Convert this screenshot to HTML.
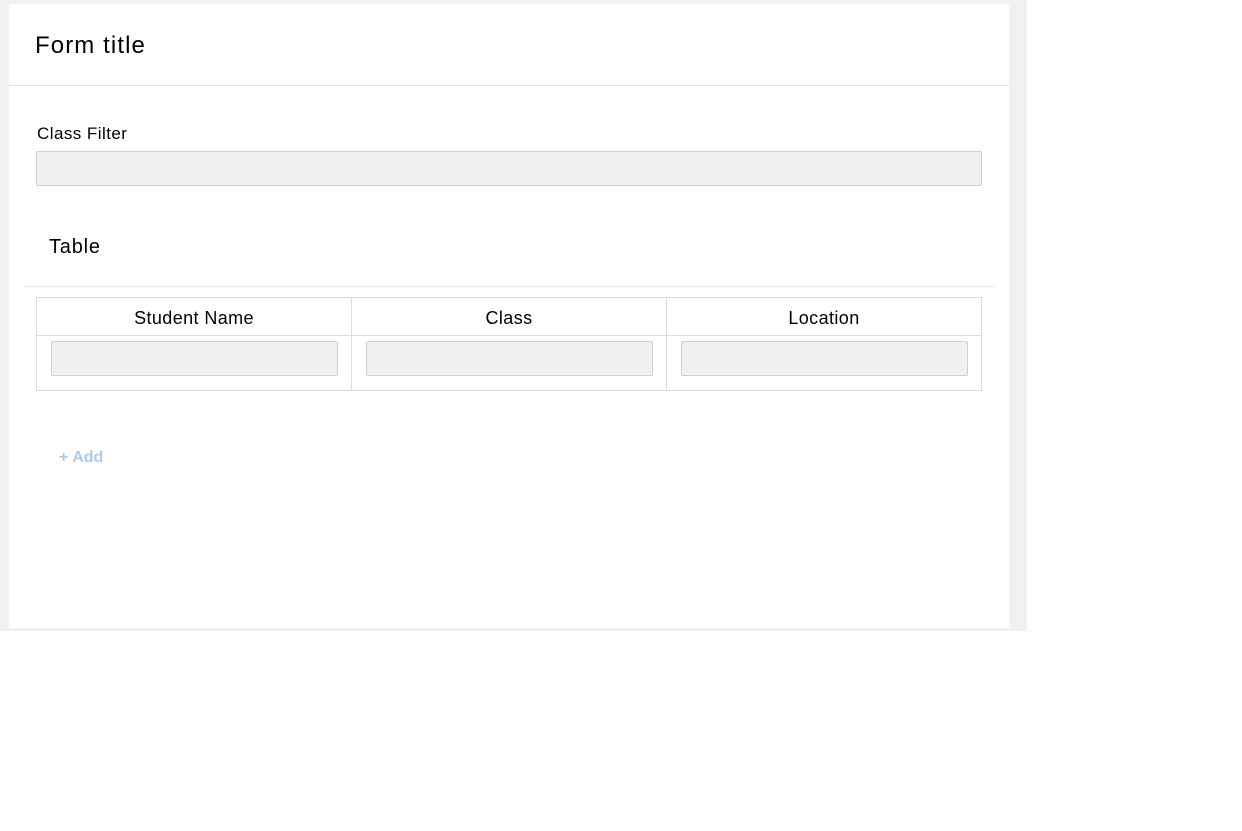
<!DOCTYPE html>
<html><head><meta charset="utf-8"><style>
html,body{margin:0;padding:0;width:1242px;height:831px;background:#fff;overflow:hidden;font-family:"Liberation Sans",sans-serif;color:#000}
.bg{position:absolute;left:0;top:0;width:1027px;height:631px;background:#f1f1f1}
.card{position:absolute;left:9px;top:4px;width:1000px;height:624px;background:#fff}
.a{position:absolute;white-space:nowrap}
.inp{position:absolute;background:#f0f0f0;border:1px solid #cfcfcf;border-radius:2px;box-sizing:border-box}
.th{position:absolute;top:299px;height:37px;line-height:38px;text-align:center;font-size:18px;letter-spacing:0.4px}
</style></head><body>
<div class="bg"></div>
<div class="card"></div>
<div class="a" style="left:35px;top:32px;font-size:24px;letter-spacing:1.1px">Form title</div>
<div class="a" style="left:9px;top:85px;width:1000px;height:1px;background:#dcdcdc"></div>
<div class="a" style="left:37px;top:124px;font-size:17px;letter-spacing:0.45px">Class Filter</div>
<div class="inp" style="left:36px;top:151px;width:946px;height:35px"></div>
<div class="a" style="left:49px;top:236px;font-size:20px;letter-spacing:0.8px">Table</div>
<div class="a" style="left:24px;top:286px;width:971px;border-top:1px dotted #d8d8d8"></div>
<div class="a" style="left:36px;top:297px;width:944px;height:92px;border:1px solid #dcdcdc"></div>
<div class="a" style="left:37px;top:335px;width:944px;height:1px;background:#dcdcdc"></div>
<div class="a" style="left:351px;top:298px;width:1px;height:92px;background:#dcdcdc"></div>
<div class="a" style="left:666px;top:298px;width:1px;height:92px;background:#dcdcdc"></div>
<div class="th" style="left:37px;width:314px">Student Name</div>
<div class="th" style="left:352px;width:314px">Class</div>
<div class="th" style="left:667px;width:314px">Location</div>
<div class="inp" style="left:51px;top:341px;width:287px;height:35px"></div>
<div class="inp" style="left:366px;top:341px;width:287px;height:35px"></div>
<div class="inp" style="left:681px;top:341px;width:287px;height:35px"></div>
<div class="a" style="left:59px;top:449px;font-size:16px;font-weight:bold;color:#a9cbec">+ Add</div>
</body></html>
